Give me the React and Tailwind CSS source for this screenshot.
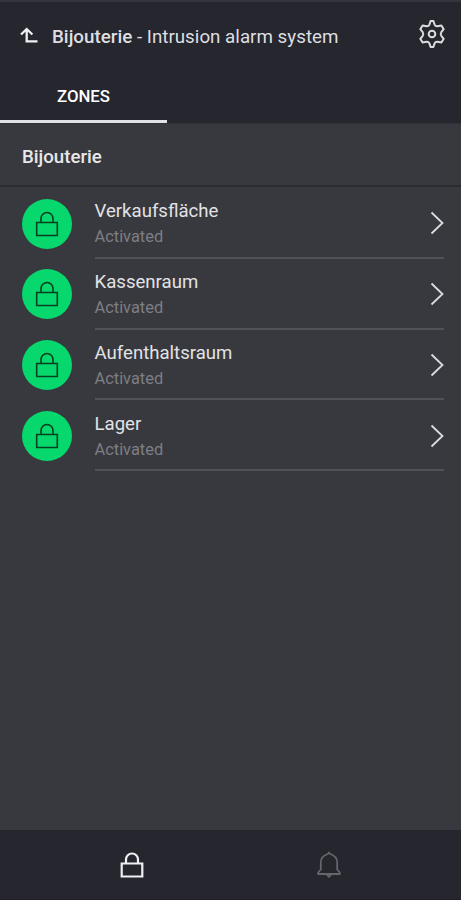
import React from 'react';

const zones = [
  { name: 'Verkaufsfläche', status: 'Activated' },
  { name: 'Kassenraum', status: 'Activated' },
  { name: 'Aufenthaltsraum', status: 'Activated' },
  { name: 'Lager', status: 'Activated' },
];

const BackIcon = () => (
  <svg width="20" height="18" viewBox="0 0 20 18" fill="none" stroke="#f0f0f2" strokeWidth="2.3">
    <path d="M1 7.5L6.7 2L12.4 7.5M6.7 2.5V14.3H17.5" />
  </svg>
);

const GearIcon = () => (
  <svg width="28" height="30" viewBox="0 0 28 30" fill="none" stroke="#dcdce0" strokeWidth="2" strokeLinejoin="round">
    <path d="M12.6 2h2.8l1.2 3.6q.8 1.8 2.8 1.6l4-.8 2.3 3.8-2.4 3q-1.2 1.8 0 3.6l2.4 3-2.3 3.8-4-.8q-2-.2-2.8 1.6l-1.2 3.6h-2.8l-1.2-3.6q-.8-1.8-2.8-1.6l-4 .8-2.3-3.8 2.4-3q1.2-1.8 0-3.6l-2.4-3 2.3-3.8 4 .8q2 .2 2.8-1.6z" />
    <circle cx="14" cy="15" r="3.3" />
  </svg>
);

const LockIcon = ({ color, strokeWidth = 1.6 }) => (
  <svg width="24" height="26" viewBox="0 0 24 26" fill="none" stroke={color} strokeWidth={strokeWidth}>
    <path d="M1.7 11.5h20.6v13H1.7zM6 11.5V7.5a6 6 0 0 1 12 0v4" />
  </svg>
);

const BellIcon = () => (
  <svg width="24" height="28" viewBox="0 0 24 28" fill="none" stroke="#65656c" strokeWidth="1.8" strokeLinejoin="round">
    <path d="M12 1.5L10.8 3C6 4.5 3.8 7.5 3.8 11.5V18.5L1.2 21.5v1.5h21.6v-1.5L20.2 18.5v-7C20.2 7.5 18 4.5 13.2 3zM9.8 23.5L12 25.8l2.2-2.3" />
  </svg>
);

const ChevronIcon = () => (
  <svg width="14" height="24" viewBox="0 0 14 24" fill="none" stroke="#dcdce0" strokeWidth="1.8">
    <path d="M1.5 1.5L12.5 12L1.5 22.5" />
  </svg>
);

const ZoneRow = ({ zone }) => (
  <li className="flex h-[70.75px] pl-[22px] pr-[17px]">
    <div className="mt-[10.5px] mr-[22.5px] flex size-[50px] shrink-0 items-center justify-center rounded-full bg-[#06d86e]">
      <LockIcon color="#06401f" />
    </div>
    <div className="flex flex-1 items-center justify-between border-b-2 border-[#515157] pt-0.5">
      <div className="pt-0.5">
        <p className="text-[18.6px] leading-[26px] text-[#e2e2e5]">{zone.name}</p>
        <p className="text-[16.4px] leading-[26px] text-[#7e7e84]">{zone.status}</p>
      </div>
      <ChevronIcon />
    </div>
  </li>
);

const App = () => {
  return (
    <div className="flex h-[900px] w-[461px] flex-col overflow-hidden border-t-2 border-[#33343c] bg-[#38393e] font-[Roboto,sans-serif]">
      <header className="h-[122px] shrink-0 border-b border-[#303138] bg-[#25262e]">
        <div className="flex h-[67px] items-center pl-5 pr-[15px]">
          <BackIcon />
          <h1 className="ml-3 flex-1 pt-[3px] text-[18.8px] text-[#dedee1]">
            <span className="font-medium">Bijouterie</span> - Intrusion alarm system
          </h1>
          <div className="pb-[3px]">
            <GearIcon />
          </div>
        </div>
        <div className="flex h-[54px] w-[167px] items-center justify-center border-b-[3px] border-[#e2e2e6] pt-1 text-[16.8px] font-medium text-white">
          ZONES
        </div>
      </header>

      <h2 className="flex h-[63px] shrink-0 items-center border-b-2 border-[#2b2c31] pl-[22px] pt-1.5 text-[18.7px] font-medium text-[#e8e8ea]">
        Bijouterie
      </h2>
      <ul className="flex-1 pt-px">
        {zones.map((zone) => (
          <ZoneRow key={zone.name} zone={zone} />
        ))}
      </ul>

      <nav className="flex h-[70px] shrink-0 items-center border-b border-[#211d2b] bg-[#25262e] px-[33px]">
        <button className="flex flex-1 justify-center">
          <LockIcon color="#f0f0f2" strokeWidth={2.2} />
        </button>
        <button className="flex flex-1 justify-center">
          <BellIcon />
        </button>
      </nav>
    </div>
  );
};

export default App;
